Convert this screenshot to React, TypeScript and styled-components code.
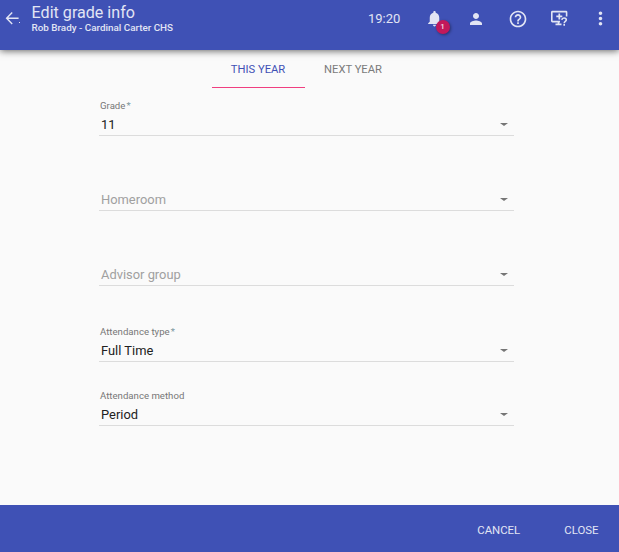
import React from 'react';
import styled, { createGlobalStyle } from 'styled-components';

const GlobalStyle = createGlobalStyle`
  * { box-sizing: border-box; }
  body { margin: 0; background: #fafafa; font-family: Roboto, sans-serif; }
`;

const Page = styled.div`
  height: 552px;
  display: flex;
  flex-direction: column;
  overflow: hidden;
  background: #fafafa;
`;

const Toolbar = styled.header`
  height: 50px;
  flex: none;
  display: flex;
  align-items: flex-start;
  justify-content: space-between;
  background: #3f51b5;
  color: #e2e5f4;
  box-shadow: 0 1px 7px rgba(0, 0, 0, 0.6);
`;

const Heading = styled.div`
  display: flex;
`;

const IconButton = styled.button<{ $width: number }>`
  width: ${(p) => p.$width}px;
  height: 37px;
  padding: 0;
  border: 0;
  background: none;
  color: inherit;
  display: flex;
  align-items: center;
  justify-content: center;
  position: relative;

  svg { display: block; fill: currentColor; }
`;

const Titles = styled.div`
  padding: 4px 0 0 6.6px;
  white-space: nowrap;
`;

const Title = styled.h1`
  margin: 0;
  font-size: 16.1px;
  line-height: 18px;
  font-weight: 400;
`;

const Subtitle = styled.div`
  font-size: 9.85px;
  line-height: 11px;
  font-weight: 500;
`;

const Actions = styled.div`
  display: flex;
`;

const Clock = styled.time`
  width: 45px;
  font-size: 13px;
  line-height: 37px;
`;

const Badge = styled.span`
  position: absolute;
  left: 22.5px;
  top: 20px;
  width: 14px;
  height: 14px;
  border-radius: 50%;
  background: #c2185b;
  color: #f3dce6;
  font: 500 8px/14px Roboto, sans-serif;
  text-align: center;
  box-shadow: 1px 1px 3px rgba(0, 0, 0, 0.4);
`;

const Content = styled.main`
  flex: 1;
`;

const Tabs = styled.nav`
  display: flex;
  justify-content: center;
  height: 38px;
  padding-right: 5px;
`;

const Tab = styled.button<{ $active?: boolean; $width: number }>`
  width: ${(p) => p.$width}px;
  padding: 2px 1px 0 0;
  border: 0;
  border-bottom: 1px solid ${(p) => (p.$active ? '#f03f80' : 'transparent')};
  background: none;
  color: ${(p) => (p.$active ? '#3f51b5' : '#7b7b7b')};
  font: 400 11.2px/35px Roboto, sans-serif;
`;

const Form = styled.form`
  width: 415px;
  margin-left: 99px;
  padding-top: 11px;
`;

const Field = styled.div<{ $gap: number }>`
  height: 37px;
  margin-bottom: ${(p) => p.$gap}px;
  display: flex;
  flex-direction: column;
  justify-content: flex-end;
  border-bottom: 1px solid #dcdcdc;
`;

const Label = styled.label`
  padding-left: 1px;
  font-size: 9.65px;
  line-height: 12px;
  color: #777;

  span { padding-left: 1px; color: #7b98a0; }
`;

const Value = styled.div<{ $empty?: boolean }>`
  height: 23px;
  padding: 2px 6px 0 2px;
  display: flex;
  align-items: center;
  justify-content: space-between;
  font-size: 12.9px;
  color: ${(p) => (p.$empty ? '#a0a0a0' : '#212121')};
`;

const Caret = styled.i`
  border: solid transparent;
  border-width: 3px 4px 0;
  border-top-color: #757575;
`;

const Footer = styled.footer`
  height: 47px;
  flex: none;
  display: flex;
  justify-content: flex-end;
  align-items: center;
  gap: 44px;
  padding: 3px 20.5px 0 0;
  background: #3f51b5;
`;

const FooterButton = styled.button`
  padding: 0;
  border: 0;
  background: none;
  color: #e2e5f4;
  font: 400 11.4px/19px Roboto, sans-serif;
`;

const Icon = ({ d, size = 18 }: { d: string; size?: number }) => (
  <svg width={size} height={size} viewBox="0 0 24 24"><path d={d} /></svg>
);

const icons = {
  bell: 'M12 22c1.1 0 2-.9 2-2h-4c0 1.1.9 2 2 2zm6-6v-5c0-3.07-1.63-5.64-4.5-6.32V4c0-.83-.67-1.5-1.5-1.5s-1.5.67-1.5 1.5v.68C7.64 5.36 6 7.92 6 11v5l-2 2v1h16v-1l-2-2z',
  person: 'M12 12c2.21 0 4-1.79 4-4s-1.79-4-4-4-4 1.79-4 4 1.79 4 4 4zm0 2c-2.67 0-8 1.34-8 4v2h16v-2c0-2.66-5.33-4-8-4z',
  help: 'M11 18h2v-2h-2v2zm1-16C6.48 2 2 6.48 2 12s4.48 10 10 10 10-4.48 10-10S17.52 2 12 2zm0 18c-4.41 0-8-3.59-8-8s3.59-8 8-8 8 3.59 8 8-3.59 8-8 8zm0-14c-2.21 0-4 1.79-4 4h2c0-1.1.9-2 2-2s2 .9 2 2c0 2-3 1.75-3 5h2c0-2.25 3-2.5 3-5 0-2.21-1.79-4-4-4z',
  more: 'M12 8c1.1 0 2-.9 2-2s-.9-2-2-2-2 .9-2 2 .9 2 2 2zm0 2c-1.1 0-2 .9-2 2s.9 2 2 2 2-.9 2-2-.9-2-2-2zm0 6c-1.1 0-2 .9-2 2s.9 2 2 2 2-.9 2-2-.9-2-2-2z',
};

const BackIcon = () => (
  <svg width="17" height="17" viewBox="0 0 17 17">
    <path d="M8.2 2.6L2.6 8.3L8.2 14M2.8 8.3H14.6" fill="none" stroke="currentColor" strokeWidth="1.4" />
    <rect x="15" y="12" width="1" height="1" />
  </svg>
);

const ScreenHelpIcon = () => (
  <svg width="19" height="19" viewBox="0 0 19 19">
    <path d="M10 12.6H2.4Q1.8 12.6 1.8 12V3.2Q1.8 2.6 2.4 2.6H16Q16.6 2.6 16.6 3.2V7.5" fill="none" stroke="currentColor" strokeWidth="1.6" />
    <path d="M5.5 15.4H11.5M8.5 12.5V15.5M9.3 4.4V10.4M6.3 7.4H12.3" fill="none" stroke="currentColor" strokeWidth="1.7" />
    <path d="M11.8 10.8Q12 9 14 9Q16.3 9 16.3 10.8C16.3 12.4 14.2 12.4 14.2 14.2M14.2 15V16.7" fill="none" stroke="currentColor" strokeWidth="1.6" />
  </svg>
);

const fields = [
  { label: 'Grade', required: true, value: '11', gap: 38 },
  { value: 'Homeroom', empty: true, gap: 38 },
  { value: 'Advisor group', empty: true, gap: 39 },
  { label: 'Attendance type', required: true, value: 'Full Time', gap: 27 },
  { label: 'Attendance method', value: 'Period', gap: 0 },
];

export default function App() {
  return (
    <Page>
      <GlobalStyle />
      <Toolbar>
        <Heading>
          <IconButton $width={25} aria-label="Back"><BackIcon /></IconButton>
          <Titles>
            <Title>Edit grade info</Title>
            <Subtitle>Rob Brady - Cardinal Carter CHS</Subtitle>
          </Titles>
        </Heading>
        <Actions>
          <Clock>19:20</Clock>
          <IconButton $width={42} aria-label="Notifications"><Icon d={icons.bell} size={19} /><Badge>1</Badge></IconButton>
          <IconButton $width={42} aria-label="Account"><Icon d={icons.person} /></IconButton>
          <IconButton $width={41} aria-label="Help"><Icon d={icons.help} size={20} /></IconButton>
          <IconButton $width={43} aria-label="Screen help"><ScreenHelpIcon /></IconButton>
          <IconButton $width={38} aria-label="More"><Icon d={icons.more} size={21} /></IconButton>
        </Actions>
      </Toolbar>
      <Content>
        <Tabs>
          <Tab $active $width={93}>THIS YEAR</Tab>
          <Tab $width={97}>NEXT YEAR</Tab>
        </Tabs>
        <Form>
          {fields.map((f) => (
            <Field key={f.value} $gap={f.gap}>
              {f.label && <Label>{f.label}{f.required && <span>*</span>}</Label>}
              <Value $empty={f.empty}>{f.value}<Caret /></Value>
            </Field>
          ))}
        </Form>
      </Content>
      <Footer>
        <FooterButton>CANCEL</FooterButton>
        <FooterButton>CLOSE</FooterButton>
      </Footer>
    </Page>
  );
}
